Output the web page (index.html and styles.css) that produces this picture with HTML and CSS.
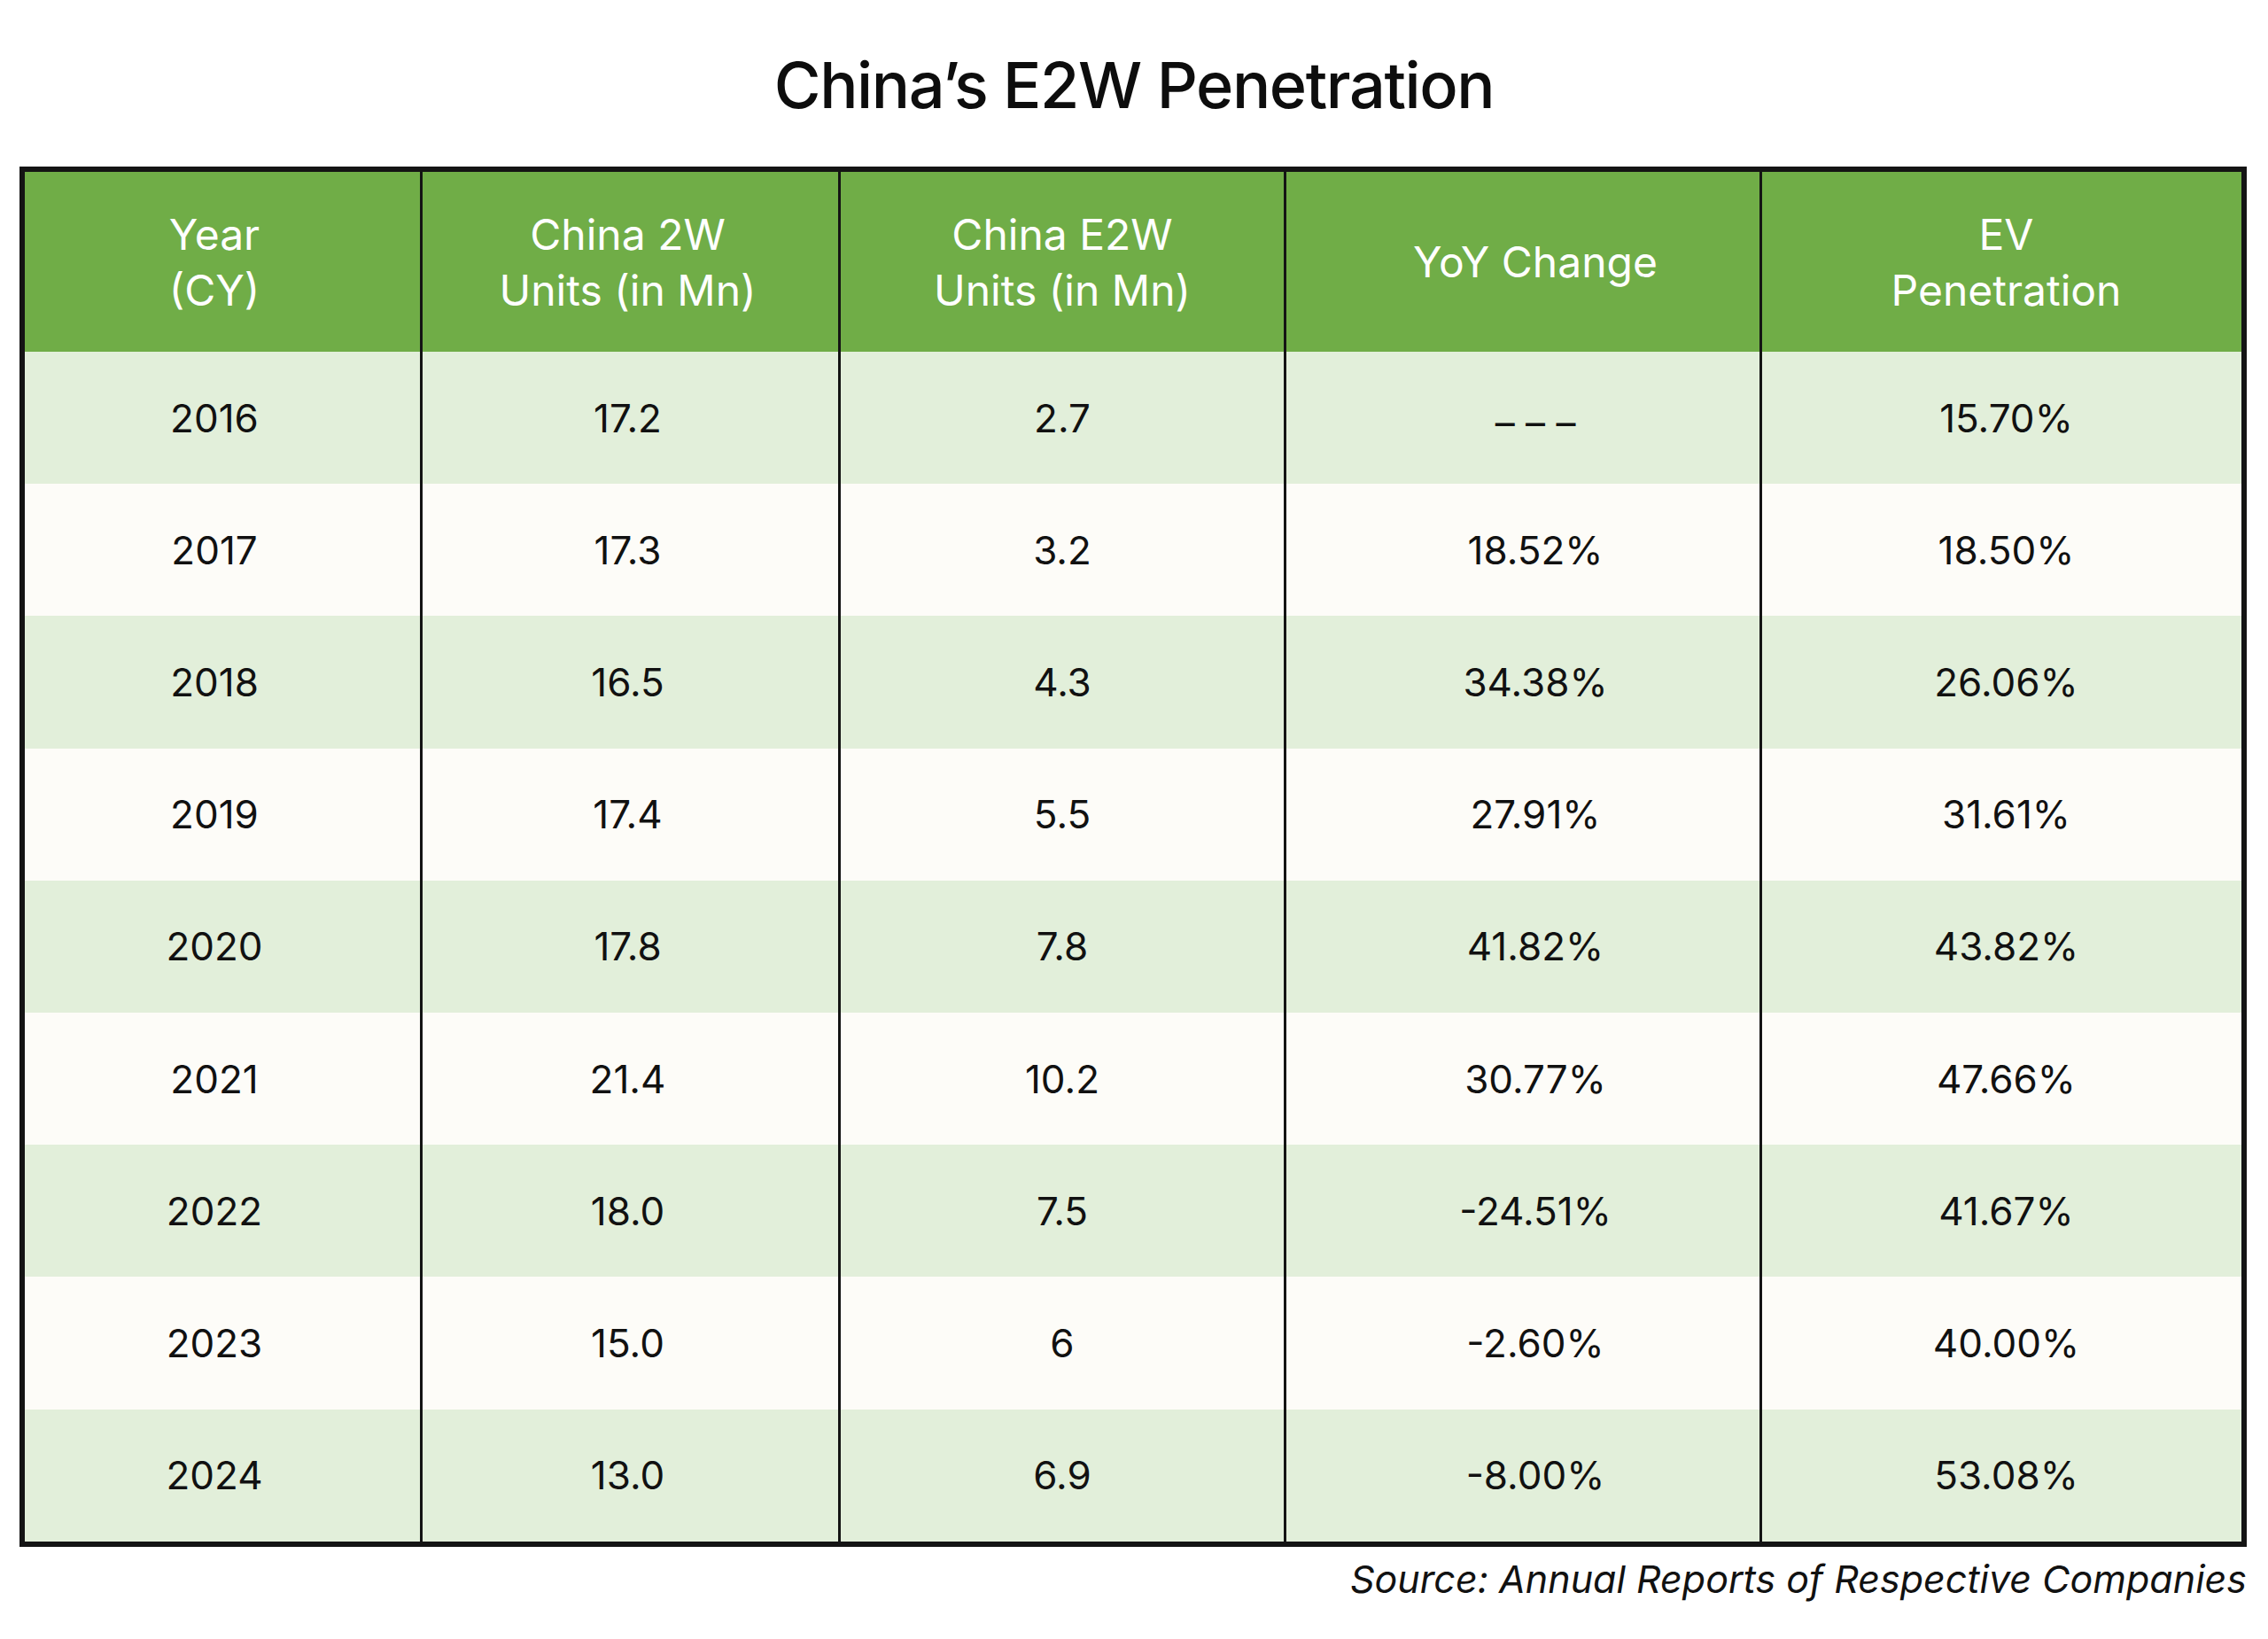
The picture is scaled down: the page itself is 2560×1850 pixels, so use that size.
FILE: index.html
```html
<!DOCTYPE html>
<html lang="en">
<head>
<meta charset="utf-8">
<title>China's E2W Penetration</title>
<link rel="stylesheet" href="styles.css">
</head>
<body>
<div class="page">
  <h1 class="title">China’s E2W Penetration</h1>
  <div class="table">
    <div class="row head">
      <div class="cell c1">Year<br>(CY)</div>
      <div class="cell c2">China 2W<br>Units (in Mn)</div>
      <div class="cell c3">China E2W<br>Units (in Mn)</div>
      <div class="cell c4">YoY Change</div>
      <div class="cell c5">EV<br>Penetration</div>
    </div>
    <div class="row alt">
      <div class="cell c1">2016</div><div class="cell c2">17.2</div><div class="cell c3">2.7</div><div class="cell c4 dash">– – –</div><div class="cell c5">15.70%</div>
    </div>
    <div class="row">
      <div class="cell c1">2017</div><div class="cell c2">17.3</div><div class="cell c3">3.2</div><div class="cell c4">18.52%</div><div class="cell c5">18.50%</div>
    </div>
    <div class="row alt">
      <div class="cell c1">2018</div><div class="cell c2">16.5</div><div class="cell c3">4.3</div><div class="cell c4">34.38%</div><div class="cell c5">26.06%</div>
    </div>
    <div class="row">
      <div class="cell c1">2019</div><div class="cell c2">17.4</div><div class="cell c3">5.5</div><div class="cell c4">27.91%</div><div class="cell c5">31.61%</div>
    </div>
    <div class="row alt">
      <div class="cell c1">2020</div><div class="cell c2">17.8</div><div class="cell c3">7.8</div><div class="cell c4">41.82%</div><div class="cell c5">43.82%</div>
    </div>
    <div class="row">
      <div class="cell c1">2021</div><div class="cell c2">21.4</div><div class="cell c3">10.2</div><div class="cell c4">30.77%</div><div class="cell c5">47.66%</div>
    </div>
    <div class="row alt">
      <div class="cell c1">2022</div><div class="cell c2">18.0</div><div class="cell c3">7.5</div><div class="cell c4">-24.51%</div><div class="cell c5">41.67%</div>
    </div>
    <div class="row">
      <div class="cell c1">2023</div><div class="cell c2">15.0</div><div class="cell c3">6</div><div class="cell c4">-2.60%</div><div class="cell c5">40.00%</div>
    </div>
    <div class="row alt">
      <div class="cell c1">2024</div><div class="cell c2">13.0</div><div class="cell c3">6.9</div><div class="cell c4">-8.00%</div><div class="cell c5">53.08%</div>
    </div>
  </div>
  <p class="source">Source: Annual Reports of Respective Companies</p>
</div>
</body>
</html>
```

FILE: styles.css
```css
html, body {
  margin: 0;
  padding: 0;
  background: #ffffff;
}
body {
  font-family: Inter, "Liberation Sans", sans-serif;
  color: #111111;
}
.page {
  width: 2514px;
  margin: 0 0 0 22px;
  padding-top: 52px;
}
.title {
  margin: 0 0 48px -22px;
  width: 2560px;
  text-align: center;
  font-size: 72px;
  line-height: 88px;
  font-weight: 500;
  color: #0d0d0d;
  letter-spacing: -1.4px;
}
.table {
  border: 6px solid #141414;
  display: flex;
  flex-direction: column;
}
.row {
  display: grid;
  grid-template-columns: 446px 472px 503px 537px 544px;
  height: 149.2px;
  background: #fdfcf8;
}
.row.alt {
  background: #e2efda;
}
.row.head {
  height: 203px;
  background: #70ad47;
  color: #ffffff;
}
.cell {
  display: flex;
  align-items: center;
  justify-content: center;
  text-align: center;
  font-size: 44px;
  line-height: 56px;
  box-sizing: border-box;
}
.head .cell {
  font-size: 48px;
  line-height: 63px;
}
.c1 {
  padding-right: 18px;
}
.c2 {
  padding-right: 6px;
}
.c2, .c3, .c4, .c5 {
  border-left: 3px solid #141414;
}
.c4 {
  padding-left: 28px;
}
.c5 {
  padding-left: 10px;
}
.dash {
  padding-top: 10px;
}
.source {
  margin: 10px 0 0 0;
  text-align: right;
  font-size: 43px;
  line-height: 52px;
  font-style: italic;
  color: #111111;
}
```
